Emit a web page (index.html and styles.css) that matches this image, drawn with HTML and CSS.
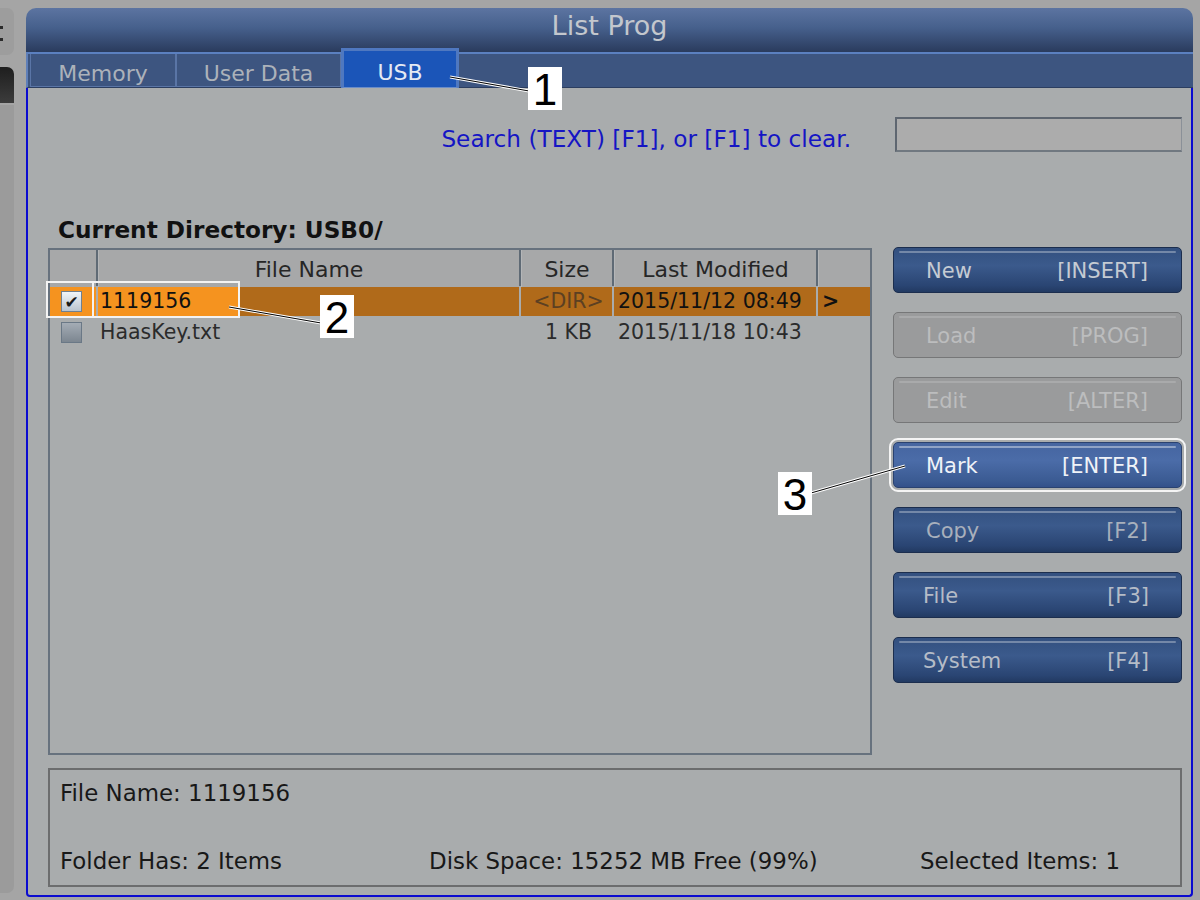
FILE: index.html
```html
<!DOCTYPE html>
<html>
<head>
<meta charset="utf-8">
<title>List Prog</title>
<link rel="stylesheet" href="styles.css">
</head>
<body>
<div class="screen">
  <div class="side">
    <div class="side-top"><i class="dot"></i><i class="dot"></i></div>
    <div class="side-dark"></div>
    <div class="side-rest"></div>
  </div>
  <div class="window">
    <div class="titlebar">List Prog</div>
    <div class="tabbar">
      <div class="tab tab-mem">Memory</div>
      <div class="tab tab-ud">User Data</div>
      <div class="tab tab-active">USB</div>
    </div>
    <div class="content">
      <div class="search-row">
        <span class="search-hint">Search (TEXT) [F1], or [F1] to clear.</span>
        <div class="search-box"></div>
      </div>
      <div class="curdir">Current Directory: USB0/</div>
      <div class="main-row">
        <div class="filetable">
          <div class="thead">
            <div class="th"></div>
            <div class="th">File Name</div>
            <div class="th">Size</div>
            <div class="th">Last Modified</div>
            <div class="th"></div>
          </div>
          <div class="trow sel">
            <div class="td c-chk bright"><span class="chk on">&#10004;</span></div>
            <div class="td c-name">1119156</div>
            <div class="td c-size dir">&lt;DIR&gt;</div>
            <div class="td c-date">2015/11/12 08:49</div>
            <div class="td c-arrow">&gt;</div>
          </div>
          <div class="trow">
            <div class="td c-chk"><span class="chk"></span></div>
            <div class="td c-name">HaasKey.txt</div>
            <div class="td c-size">1 KB</div>
            <div class="td c-date">2015/11/18 10:43</div>
            <div class="td c-arrow"></div>
          </div>
          <div class="hl-frame"></div>
        </div>
        <div class="buttons">
          <div class="btn btn-blue"><span>New</span><span>[INSERT]</span></div>
          <div class="btn btn-off"><span>Load</span><span>[PROG]</span></div>
          <div class="btn btn-off"><span>Edit</span><span>[ALTER]</span></div>
          <div class="btn btn-mark"><span>Mark</span><span>[ENTER]</span></div>
          <div class="btn btn-blue btn-dim"><span>Copy</span><span>[F2]</span></div>
          <div class="btn btn-blue btn-f"><span>File</span><span>[F3]</span></div>
          <div class="btn btn-blue btn-f"><span>System</span><span>[F4]</span></div>
        </div>
      </div>
      <div class="infobox">
        <div class="info-line">File Name: 1119156</div>
        <div class="info-grid">
          <span>Folder Has: 2 Items</span>
          <span>Disk Space: 15252 MB Free (99%)</span>
          <span>Selected Items: 1</span>
        </div>
      </div>
    </div>
  </div>
</div>

<svg class="leaders" width="1200" height="900" viewBox="0 0 1200 900">
  <g stroke="#ffffff" stroke-width="3" fill="none">
    <line x1="450" y1="77" x2="529" y2="91"/>
    <line x1="229" y1="307" x2="321" y2="323"/>
    <line x1="811" y1="493" x2="905" y2="466"/>
  </g>
  <g stroke="#000000" stroke-width="1" fill="none">
    <line x1="450" y1="77" x2="529" y2="91"/>
    <line x1="229" y1="307" x2="321" y2="323"/>
    <line x1="811" y1="493" x2="905" y2="466"/>
  </g>
</svg>
<div class="callout co1">1</div>
<div class="callout co2">2</div>
<div class="callout co3">3</div>
</body>
</html>
```

FILE: styles.css
```css
html, body {
  margin: 0;
  padding: 0;
}

body {
  width: 1200px;
  height: 900px;
  background: #a5a5a5;
  font-family: "DejaVu Sans", "Liberation Sans", sans-serif;
  position: relative;
  overflow: hidden;
}

.screen {
  display: flex;
  align-items: flex-start;
}

/* left strip */
.side {
  width: 14px;
  margin-right: 12px;
  display: flex;
  flex-direction: column;
  padding-top: 8px;
}

.side-top {
  height: 47px;
  background: #9d9d9d;
  border-radius: 0 7px 7px 0;
  display: flex;
  flex-direction: column;
  gap: 9px;
  padding-top: 18px;
  box-sizing: border-box;
}

.side-top .dot {
  display: block;
  width: 3px;
  height: 3px;
  background: #2a2a2a;
}

.side-dark {
  height: 36px;
  margin-top: 12px;
  background: linear-gradient(#1e1e1e, #3c3c3c);
  border-radius: 0 7px 0 0;
}

.side-rest {
  height: 788px;
  margin-top: 2px;
  background: #9b9b9b;
  border-radius: 0 0 7px 0;
}

/* window */
.window {
  width: 1167px;
  margin-top: 8px;
  display: flex;
  flex-direction: column;
}

.titlebar {
  height: 44px;
  border-radius: 10px 10px 0 0;
  background: linear-gradient(#5c74a1, #46608c 45%, #2a3b5d);
  color: #c3c7cd;
  font-size: 27px;
  line-height: 36px;
  text-align: center;
}

.tabbar {
  height: 33px;
  border-top: 2px solid #5b80c0;
  border-bottom: 1px solid #2c3e60;
  background: #3d5580;
  display: flex;
  padding-left: 2px;
  border-left: 2px solid #5f7fb8;
  box-sizing: content-box;
}

.tab {
  box-sizing: border-box;
  height: 33px;
  border: 1px solid #5a75a6;
  border-top: none;
  color: #acb2ba;
  font-size: 22px;
  line-height: 33px;
  padding-top: 3px;
  text-align: center;
}

.tab-mem { width: 146px; }
.tab-ud { width: 165px; }

.tab-active {
  width: 118px;
  height: 40px;
  margin-top: -6px;
  background: #1b55b8;
  border: 3px solid #4f78c0;
  border-bottom: 1px solid #6a8cc8;
  color: #e4eaf3;
  line-height: 40px;
  padding-top: 2px;
}

/* content */
.content {
  background: #a9acad;
  border: 2px solid #0b0bd0;
  border-top: none;
  border-radius: 0 0 4px 4px;
  padding: 29px 9px 4px 20px;
  height: 774px;
  box-sizing: content-box;
  display: flex;
  flex-direction: column;
}

.search-row {
  height: 35px;
  display: flex;
  justify-content: flex-end;
  align-items: center;
  gap: 44px;
}

.search-hint {
  color: #1515c4;
  font-size: 23.2px;
  padding-top: 7px;
}

.search-box {
  width: 287px;
  height: 35px;
  box-sizing: border-box;
  background: #acacac;
  border-top: 2px solid #5e6670;
  border-left: 2px solid #5e6670;
  border-right: 1px solid #8a9098;
  border-bottom: 2px solid #707880;
}

.curdir {
  margin-top: 65px;
  height: 26px;
  line-height: 26px;
  font-size: 23.2px;
  font-weight: bold;
  color: #111;
  padding-left: 10px;
  margin-bottom: 5px;
}

.main-row {
  display: flex;
  gap: 21px;
  height: 507px;
}

/* file table */
.filetable {
  position: relative;
  width: 824px;
  height: 507px;
  box-sizing: border-box;
  border: 2px solid #67727e;
}

.thead,
.trow {
  display: grid;
  grid-template-columns: 46px 421px 91px 202px 1fr;
  column-gap: 2px;
}

.thead {
  height: 36px;
  background: #5f6a75;
  box-sizing: border-box;
  padding-bottom: 2px;
}

.th {
  background: #a7a8a9;
  color: #262626;
  font-size: 22px;
  line-height: 34px;
  padding-top: 3px;
  box-sizing: border-box;
  text-align: center;
  border-left: 1px solid #b4b6b8;
}

.thead .th:first-child { border-left: none; }

.trow {
  height: 29px;
  margin-top: 1px;
  margin-bottom: 2px;
}

.td {
  font-size: 20.5px;
  line-height: 29px;
  color: #2b2b2b;
  white-space: nowrap;
  overflow: hidden;
}

.c-chk {
  display: flex;
  align-items: center;
  justify-content: center;
  padding-right: 3px;
}

.c-name { padding-left: 2px; }
.c-size { text-align: center; padding-left: 4px; }
.c-date { padding-left: 4px; }
.c-arrow { padding-left: 4px; font-weight: bold; }

.sel .td {
  background: #b06a1a;
  color: #111;
}

.sel .c-chk.bright {
  background: #f5931f;
}

.sel .c-name {
  background: linear-gradient(to right, #f5931f 0, #f5931f 140px, #b06a1a 140px);
}

.sel .dir {
  color: #5c4022;
}

.chk {
  width: 21px;
  height: 21px;
  box-sizing: border-box;
  border: 1px solid #6a7886;
  background: linear-gradient(#a4acb5, #7c8690);
  font-size: 17px;
  line-height: 20px;
  text-align: center;
  color: #1a1a1a;
}

.chk.on {
  background: linear-gradient(#f1f5f9, #b9c4cf);
  border-color: #6f8090;
}

.hl-frame {
  position: absolute;
  left: -4px;
  top: 31px;
  width: 194px;
  height: 37px;
  box-sizing: border-box;
  border: 2px solid #f3f3f3;
  pointer-events: none;
}

.hl-frame::after {
  content: "";
  position: absolute;
  left: 44px;
  top: 0;
  width: 2px;
  height: 100%;
  background: #f3f3f3;
}

/* buttons */
.buttons {
  width: 289px;
  margin-top: -1px;
  display: flex;
  flex-direction: column;
  gap: 19px;
}

.btn {
  position: relative;
  height: 46px;
  box-sizing: border-box;
  border-radius: 5px;
  display: flex;
  justify-content: space-between;
  align-items: center;
  padding: 2px 33px 0 32px;
  font-size: 21px;
}

.btn::before {
  content: "";
  position: absolute;
  left: 5px;
  right: 5px;
  top: 3px;
  height: 2px;
  border-radius: 1px;
}

.btn-blue {
  background: linear-gradient(#33507f, #3b5a8c 40%, #2a4573 85%, #223a62);
  border: 1px solid #1c2e4e;
  color: #c5cbd3;
}

.btn-blue::before { background: #7488a8; }

.btn-dim { color: #a8b0bc; }
.btn-f { color: #b5bcc7; padding-left: 29px; padding-right: 32px; }

.btn-off {
  background: #9a9b9c;
  border: 1px solid #767778;
  color: #bcbdbe;
}

.btn-off::before { background: #a9aaab; }

.btn-mark {
  background: linear-gradient(#4565a0, #4b6ca8 40%, #3b5b93 85%, #33508a);
  border: 1px solid #2a4270;
  color: #f0f3f8;
  outline: 2px solid #f4f4f4;
  outline-offset: 2px;
}

.btn-mark::before { background: #8fa3c6; }

/* info box */
.infobox {
  margin-top: 13px;
  height: 119px;
  box-sizing: border-box;
  border: 2px solid #6c6d6e;
  padding: 10px 10px 11px 10px;
  display: flex;
  flex-direction: column;
  justify-content: space-between;
  font-size: 22.9px;
  color: #181818;
}

.info-line,
.info-grid {
  height: 26px;
  line-height: 26px;
}

.info-grid {
  display: grid;
  grid-template-columns: 369px 491px 1fr;
}

/* callouts (annotation overlay) */
.leaders {
  position: absolute;
  left: 0;
  top: 0;
  pointer-events: none;
}

.callout {
  position: absolute;
  width: 34px;
  height: 43px;
  background: #ffffff;
  color: #000;
  font-family: "Liberation Sans", Arial, sans-serif;
  font-size: 44px;
  line-height: 45px;
  text-align: center;
}

.co1 { left: 528px; top: 67px; }
.co2 { left: 320px; top: 295px; }
.co3 { left: 778px; top: 472px; }
```
